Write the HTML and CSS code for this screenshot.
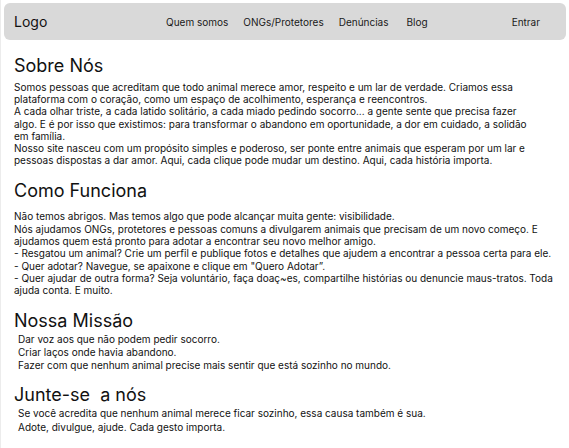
FILE: index.html
```html
<!DOCTYPE html>
<html lang="pt-BR">
<head>
<meta charset="utf-8">
<title>Sobre Nós</title>
<link rel="stylesheet" href="styles.css">
</head>
<body>
<header class="topbar">
  <div class="logo">Logo</div>
  <nav class="nav">
    <a href="#">Quem somos</a>
    <a href="#">ONGs/Protetores</a>
    <a href="#">Denúncias</a>
    <a class="nav-blog" href="#">Blog</a>
  </nav>
  <a class="login" href="#">Entrar</a>
</header>
<main class="content">
  <section class="sec sec-sobre">
    <h2 class="title">Sobre Nós</h2>
    <p class="text">Somos pessoas que acreditam que todo animal merece amor, respeito e um lar de verdade. Criamos essa<br>plataforma com o coração, como um espaço de acolhimento, esperança e reencontros.<br>A cada olhar triste, a cada latido solitário, a cada miado pedindo socorro... a gente sente que precisa fazer<br>algo. E é por isso que existimos: para transformar o abandono em oportunidade, a dor em cuidado, a solidão<br>em família.<br>Nosso site nasceu com um propósito simples e poderoso, ser ponte entre animais que esperam por um lar e<br>pessoas dispostas a dar amor. Aqui, cada clique pode mudar um destino. Aqui, cada história importa.</p>
  </section>
  <section class="sec sec-como">
    <h2 class="title">Como Funciona</h2>
    <p class="text">Não temos abrigos. Mas temos algo que pode alcançar muita gente: visibilidade.<br>Nós ajudamos ONGs, protetores e pessoas comuns a divulgarem animais que precisam de um novo começo. E<br>ajudamos quem está pronto para adotar a encontrar seu novo melhor amigo.<br>- Resgatou um animal? Crie um perfil e publique fotos e detalhes que ajudem a encontrar a pessoa certa para ele.<br>- Quer adotar? Navegue, se apaixone e clique em "Quero Adotar”.<br>- Quer ajudar de outra forma? Seja voluntário, faça doaç~es, compartilhe histórias ou denuncie maus-tratos. Toda<br>ajuda conta. E muito.</p>
  </section>
  <section class="sec sec-missao">
    <h2 class="title">Nossa Missão</h2>
    <p class="text text-indent">Dar voz aos que não podem pedir socorro.<br>Criar laços onde havia abandono.<br>Fazer com que nenhum animal precise mais sentir que está sozinho no mundo.</p>
  </section>
  <section class="sec sec-junte">
    <h2 class="title title-pre">Junte-se  a nós</h2>
    <p class="text text-indent">Se você acredita que nenhum animal merece ficar sozinho, essa causa também é sua.<br>Adote, divulgue, ajude. Cada gesto importa.</p>
  </section>
</main>
</body>
</html>
```
FILE: styles.css
```css
* { box-sizing: border-box; }
html, body { margin: 0; padding: 0; background: #ffffff; }
body {
  font-family: Inter, "Noto Sans", "Liberation Sans", sans-serif;
  color: #111;
  width: 569px;
  height: 448px;
  overflow: hidden;
  border-left: 1px solid #ececec;
}
.topbar {
  margin: 3px 3px 0 3px;
  height: 37px;
  background: #d9d9d9;
  border-radius: 6px;
  display: flex;
  align-items: center;
  padding: 0 26px 0 10px;
}
.logo { font-size: 14px; width: 152px; }
.nav { display: flex; gap: 15px; flex: 1; }
.nav .nav-blog { margin-left: 3px; }
.nav a, .login { font-size: 10px; color: #1a1a1a; text-decoration: none; }
.content { padding: 0 0 0 13px; }
.title {
  font-size: 18px;
  font-weight: 400;
  margin: 0;
  line-height: 22px;
}
.title-pre { white-space: pre; }
.text {
  font-size: 10px;
  line-height: 12.2px;
  margin: 0;
  white-space: nowrap;
}
.sec-sobre { padding-top: 15px; }
.sec-sobre .text { margin-top: 4px; }
.sec-como { padding-top: 14px; }
.sec-como .text { margin-top: 8px; line-height: 12.3px; }
.sec-missao { padding-top: 13px; }
.sec-missao .text { margin-top: 1px; line-height: 13px; }
.sec-junte { padding-top: 12px; }
.sec-junte .text { margin-top: 0; line-height: 14px; }
.text-indent { padding-left: 4px; }
```
